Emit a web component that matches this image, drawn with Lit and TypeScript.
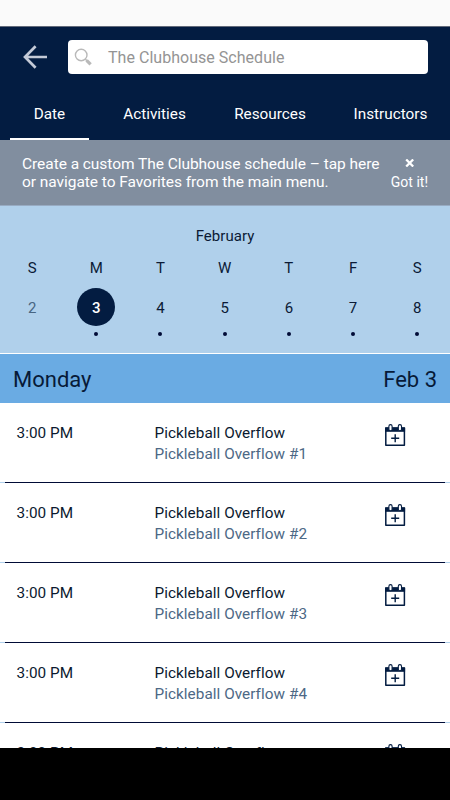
import { LitElement, html, css } from "lit";
import { customElement } from "lit/decorators.js";
import { classMap } from "lit/directives/class-map.js";

const days = [
  { letter: "S", date: 2 },
  { letter: "M", date: 3 },
  { letter: "T", date: 4 },
  { letter: "W", date: 5 },
  { letter: "T", date: 6 },
  { letter: "F", date: 7 },
  { letter: "S", date: 8 },
];
const tabs = ["Date", "Activities", "Resources", "Instructors"];

@customElement("app-root")
export class AppRoot extends LitElement {
  static styles = css`
    :host {
      display: flex;
      flex-direction: column;
      width: 450px;
      height: 800px;
      overflow: hidden;
      background: #fff;
      color: #031c41;
      font: 400 15px/18px Roboto, sans-serif;
      font-variant-ligatures: none;
      white-space: nowrap;
    }
    * { box-sizing: border-box; }
    svg { display: block; }
    .status { height: 26px; flex: none; background: #fafafa; }
    .top { height: 114px; flex: none; background: #031c41; border-top: 1px solid #626a7a; color: #fff; display: flex; flex-direction: column; justify-content: space-between; }
    .search-row { display: flex; align-items: center; padding: 13px 22px 0; }
    .back { width: 46px; }
    .search { flex: 1; height: 34px; border-radius: 4px; background: #fff; display: flex; align-items: center; padding: 0 6px; gap: 16px; color: #949494; font-size: 16px; letter-spacing: 0.03px; }
    .search span { padding-top: 2px; }
    .tabs { display: flex; height: 50px; padding: 0 10px; font-size: 15.3px; }
    .tab { display: flex; justify-content: center; padding-top: 15px; }
    .tab.date { width: 79px; border-bottom: 2px solid #fff; }
    .tab.activities { width: 131px; }
    .tab.resources { width: 100px; }
    .tab.instructors { width: 120px; padding-left: 21px; }
    .banner { height: 66px; flex: none; background: #818e9f; color: #fff; display: flex; padding: 15px 22px 0; justify-content: space-between; border-bottom: 1px solid #98abc2; }
    .message { font-size: 15.5px; line-height: 18px; letter-spacing: -0.05px; }
    .dismiss { display: flex; flex-direction: column; align-items: center; gap: 7px; padding-top: 4px; font-size: 14px; line-height: 16px; }
    .calendar { height: 147px; flex: none; background: #b0d0eb; color: #0b1a36; padding-top: 21px; }
    .month { text-align: center; letter-spacing: 0.05px; }
    .week { display: grid; grid-template-columns: repeat(7, 64.2px); margin-top: 14px; }
    .day { display: flex; flex-direction: column; align-items: center; }
    .circle { width: 38px; height: 38px; border-radius: 50%; display: grid; place-items: center; margin-top: 11px; padding-top: 2px; }
    .past { color: #486582; }
    .selected { background: #031c41; color: #fff; font-weight: 500; }
    .dot { width: 4px; height: 4px; border-radius: 50%; background: #000b36; margin-top: 6px; }
    .heading { height: 50px; flex: none; border-top: 1px solid #fff; background: #6aabe3; display: flex; justify-content: space-between; align-items: center; padding: 3px 13px 0; color: #071a38; font-size: 22px; }
    .list { height: 345px; flex: none; overflow: hidden; }
    .row { height: 80px; display: grid; grid-template-columns: 138px 229px 22px; padding: 20px 0 0 16.5px; line-height: 21px; font-size: 15.3px; letter-spacing: 0.05px; color: #0b1a30; }
    .resource { color: #4d6885; }
    .line { height: 1px; margin-top: -1px; background: #b0d0eb; padding: 0 5px; }
    .rule { height: 1px; background: #000b36; }
    .bottom { flex: 1; background: #000; }
  `;

  renderCalendarIcon() {
    return html`<svg width="22" height="24" viewBox="0 0 22 24">
      <path d="M1.8 5h18.6v17.2H1.8z" fill="#fff" stroke="#031c41" stroke-width="1.5" stroke-linejoin="round"/>
      <path d="M1.1 4.5h20v4.3h-20z" fill="#031c41"/>
      <rect x="4.9" y="1.6" width="3.2" height="6.2" rx="1.6" fill="#fff" stroke="#031c41" stroke-width="1.1"/>
      <rect x="14.3" y="1.6" width="3.2" height="6.2" rx="1.6" fill="#fff" stroke="#031c41" stroke-width="1.1"/>
      <path d="M11.2 11.2v8M7.2 15.2h8" stroke="#031c41" stroke-width="1.4"/>
    </svg>`;
  }

  render() {
    return html`
      <div class="status"></div>
      <div class="top">
        <div class="search-row">
          <div class="back">
            <svg width="26" height="24" viewBox="0 0 26 24" fill="none" stroke="#c4cad7" stroke-width="2.7">
              <path d="M13.6 1.3 3 12l10.6 10.7M3 12h22"/>
            </svg>
          </div>
          <div class="search">
            <svg width="18" height="18" viewBox="0 0 18 18" fill="none" stroke="#b9b9b9">
              <circle cx="7.2" cy="7" r="5.8" stroke-width="1.4"/>
              <path d="m11.4 11.2 1.6 1.6" stroke-width="1.5"/>
              <path d="m12.6 12.4 4 4" stroke-width="3.2"/>
            </svg>
            <span>The Clubhouse Schedule</span>
          </div>
        </div>
        <div class="tabs">
          ${tabs.map((t) => html`<div class="tab ${t.toLowerCase()}"><span>${t}</span></div>`)}
        </div>
      </div>
      <div class="banner">
        <div class="message">Create a custom The Clubhouse schedule – tap here<br />or navigate to Favorites from the main menu.</div>
        <div class="dismiss">
          <svg width="9" height="8" viewBox="0 0 9 8"><path d="m1.2.5 7 7M8.2.5l-7 7" stroke="#fff" stroke-width="2.3"/></svg>
          <span>Got it!</span>
        </div>
      </div>
      <div class="calendar">
        <div class="month">February</div>
        <div class="week">
          ${days.map((d) => html`<div class="day">
            <span>${d.letter}</span>
            <div class=${classMap({ circle: true, past: d.date < 3, selected: d.date === 3 })}>${d.date}</div>
            ${d.date >= 3 ? html`<div class="dot"></div>` : null}
          </div>`)}
        </div>
      </div>
      <div class="heading"><span>Monday</span><span>Feb 3</span></div>
      <div class="list">
        ${[1, 2, 3, 4, 5].map((n) => html`
          <div class="row">
            <span>3:00 PM</span>
            <div>
              <div>Pickleball Overflow</div>
              <div class="resource">Pickleball Overflow #${n}</div>
            </div>
            ${this.renderCalendarIcon()}
          </div>
          <div class="line"><div class="rule"></div></div>`)}
      </div>
      <div class="bottom"></div>
    `;
  }
}
